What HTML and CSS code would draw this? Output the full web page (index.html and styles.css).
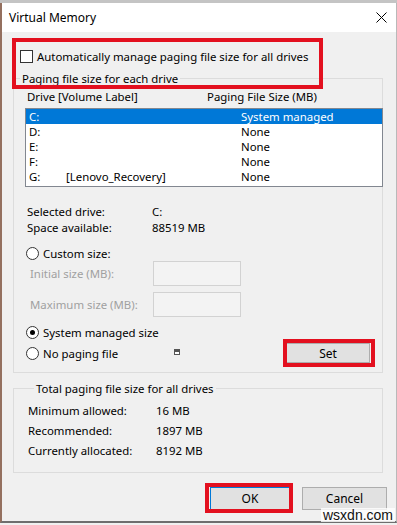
FILE: index.html
```html
<!DOCTYPE html>
<html lang="en">
<head>
    <meta charset="UTF-8">
    <title>Virtual Memory</title>
    <link rel="stylesheet" href="styles.css">
</head>
<body>
    <div class="topstrip"></div>
    <div class="window">
        <div class="titlebar">
            <span>Virtual Memory</span>
            <svg class="close" width="11" height="11" viewBox="0 0 11 11">
                <path d="M0.5 0.5 L10.5 10.5 M10.5 0.5 L0.5 10.5" stroke="#000" stroke-width="1" fill="none"/>
            </svg>
        </div>

        <div class="content">
            <div class="check-row">
                <span class="checkbox"></span>
                <span>Automatically manage paging file size for all drives</span>
            </div>

            <fieldset class="group group-drives">
                <legend>Paging file size for each drive</legend>
                <div class="group-inner">
                    <div class="list-head">
                        <span class="h1">Drive</span><span class="h2">[Volume Label]</span><span>Paging File Size (MB)</span>
                    </div>
                    <div class="listbox">
                        <div class="row selected"><span class="c1">C:</span><span class="c2"></span><span>System managed</span></div>
                        <div class="row"><span class="c1">D:</span><span class="c2"></span><span>None</span></div>
                        <div class="row"><span class="c1">E:</span><span class="c2"></span><span>None</span></div>
                        <div class="row"><span class="c1">F:</span><span class="c2"></span><span>None</span></div>
                        <div class="row"><span class="c1">G:</span><span class="c2">[Lenovo_Recovery]</span><span>None</span></div>
                    </div>

                    <div class="info first"><span class="label">Selected drive:</span><span>C:</span></div>
                    <div class="info"><span class="label">Space available:</span><span>88519 MB</span></div>

                    <div class="radio-row custom"><span class="radio"></span><span>Custom size:</span></div>
                    <div class="size-row"><span class="size-label">Initial size (MB):</span><span class="size-box"></span></div>
                    <div class="size-row second"><span class="size-label">Maximum size (MB):</span><span class="size-box"></span></div>

                    <div class="radio-row system"><span class="radio checked"></span><span>System managed size</span></div>
                    <div class="set-row">
                        <div class="radio-row nopage"><span class="radio"></span><span>No paging file</span></div>
                        <svg class="tiny" width="6" height="6" viewBox="0 0 6 6">
                            <rect x="0.5" y="0.5" width="5" height="5" fill="#fff" stroke="#555"/>
                            <rect x="1" y="1" width="4" height="2" fill="#555"/>
                        </svg>
                        <button class="btn set-btn">Set</button>
                    </div>
                </div>
            </fieldset>

            <fieldset class="group group-total">
                <legend>Total paging file size for all drives</legend>
                <div class="total-row"><span class="tlabel">Minimum allowed:</span><span>16 MB</span></div>
                <div class="total-row"><span class="tlabel">Recommended:</span><span>1897 MB</span></div>
                <div class="total-row"><span class="tlabel">Currently allocated:</span><span>8192 MB</span></div>
            </fieldset>

            <div class="buttons">
                <button class="btn ok-btn">OK</button>
                <button class="btn cancel-btn">Cancel</button>
            </div>
        </div>
    </div>

    <!-- red highlight boxes drawn over the dialog -->
    <div class="mark mark-auto"></div>
    <div class="mark mark-set"></div>
    <div class="mark mark-ok"></div>
    <div class="watermark">wsxdn.com</div>
</body>
</html>
```

FILE: styles.css
```css
body { margin: 0; width: 397px; height: 525px; overflow: hidden; background: #f0f0f0; font-family: "Noto Sans", sans-serif; font-size: 11.4px; color: #000; }
.topstrip { height: 3px; background: #c4c4c4; }
.window { height: 520px; border-left: 2px solid #94705f; border-right: 1px solid #b9b9b9; border-bottom: 2px solid #6e6e6e; box-sizing: border-box; background: #f0f0f0; }
.titlebar { height: 29px; background: #fff; display: flex; align-items: center; justify-content: space-between; padding: 0 9px 0 7px; font-size: 12px; }
.close { display: block; }
.content { padding: 0 13px 0 11px; }

.check-row { display: flex; align-items: center; gap: 4px; margin-top: 17px; padding-left: 7px; height: 14px; }
.checkbox { width: 11px; height: 11px; border: 1px solid #333; background: #fff; }

.group { margin: 0; padding: 0; border: 1px solid #dcdcdc; min-width: 0; }
.group legend { margin-left: 6px; padding: 0 2px; line-height: 15px; }
.group-drives { margin-top: 8px; padding-bottom: 9px; }
.group-inner { padding-left: 11px; }

.list-head { margin-top: 3px; line-height: 15px; padding-left: 2px; display: flex; white-space: nowrap; }
.list-head .h1 { flex: none; width: 31px; }
.list-head .h2 { flex: none; width: 149px; }

.listbox { margin-top: 4px; width: 356px; height: 77px; border: 1px solid #828790; background: #fff; }
.row { display: flex; height: 15px; line-height: 15px; padding-left: 3px; white-space: nowrap; }
.row .c1 { width: 37px; }
.row .c2 { width: 175px; }
.row.selected { background: #0078d7; color: #fff; }

.info { display: flex; line-height: 16px; padding-left: 2px; }
.info.first { margin-top: 17px; }
.info .label { width: 125px; }

.radio-row { display: flex; align-items: center; gap: 4px; height: 16px; padding-left: 1px; }
.radio { width: 11px; height: 11px; border: 1px solid #333; border-radius: 50%; background: #fff; position: relative; }
.radio.checked::after { content: ""; position: absolute; left: 3px; top: 3px; width: 5px; height: 5px; border-radius: 50%; background: #000; }
.custom { margin-top: 9px; }
.system { margin-top: 7px; }

.size-row { display: flex; align-items: center; height: 25px; padding-left: 5px; }
.size-row.second { margin-top: 6px; }
.size-label { width: 123px; color: #a0a0a0; }
.size-box { width: 86px; height: 23px; border: 1px solid #d2d2d2; background: #f3f3f3; }

.set-row { display: flex; align-items: center; height: 20px; margin-top: 3px; }
.set-row .nopage { width: 148px; }
.tiny { display: block; margin-top: -3px; }
.set-btn { margin-left: 106px; width: 84px; height: 20px; }

.btn { font-family: inherit; font-size: 12px; color: #000; background: #e1e1e1; border: 1px solid #adadad; padding: 0; }

.group-total { margin-top: 8px; padding: 5px 0 11px 14px; }
.total-row { display: flex; line-height: 20px; white-space: nowrap; }
.total-row .tlabel { width: 128px; }

.buttons { display: flex; justify-content: flex-end; gap: 12px; margin-top: 14px; margin-right: -4px; }
.ok-btn { width: 80px; height: 23px; border-color: #0078d7; }
.cancel-btn { width: 85px; height: 23px; }

.mark { position: absolute; border: 4px solid #e3101f; box-sizing: border-box; }
.mark-auto { left: 12px; top: 38px; width: 311px; height: 51px; }
.mark-set { left: 283px; top: 339px; width: 92px; height: 28px; }
.mark-ok { left: 205px; top: 483px; width: 88px; height: 30px; }

.watermark { position: absolute; left: 321px; top: 508px; padding: 0 2px; background: rgba(255, 255, 255, 0.8); font-family: "Liberation Sans", Arial, sans-serif; font-size: 14px; line-height: 14px; color: #111; }
```
